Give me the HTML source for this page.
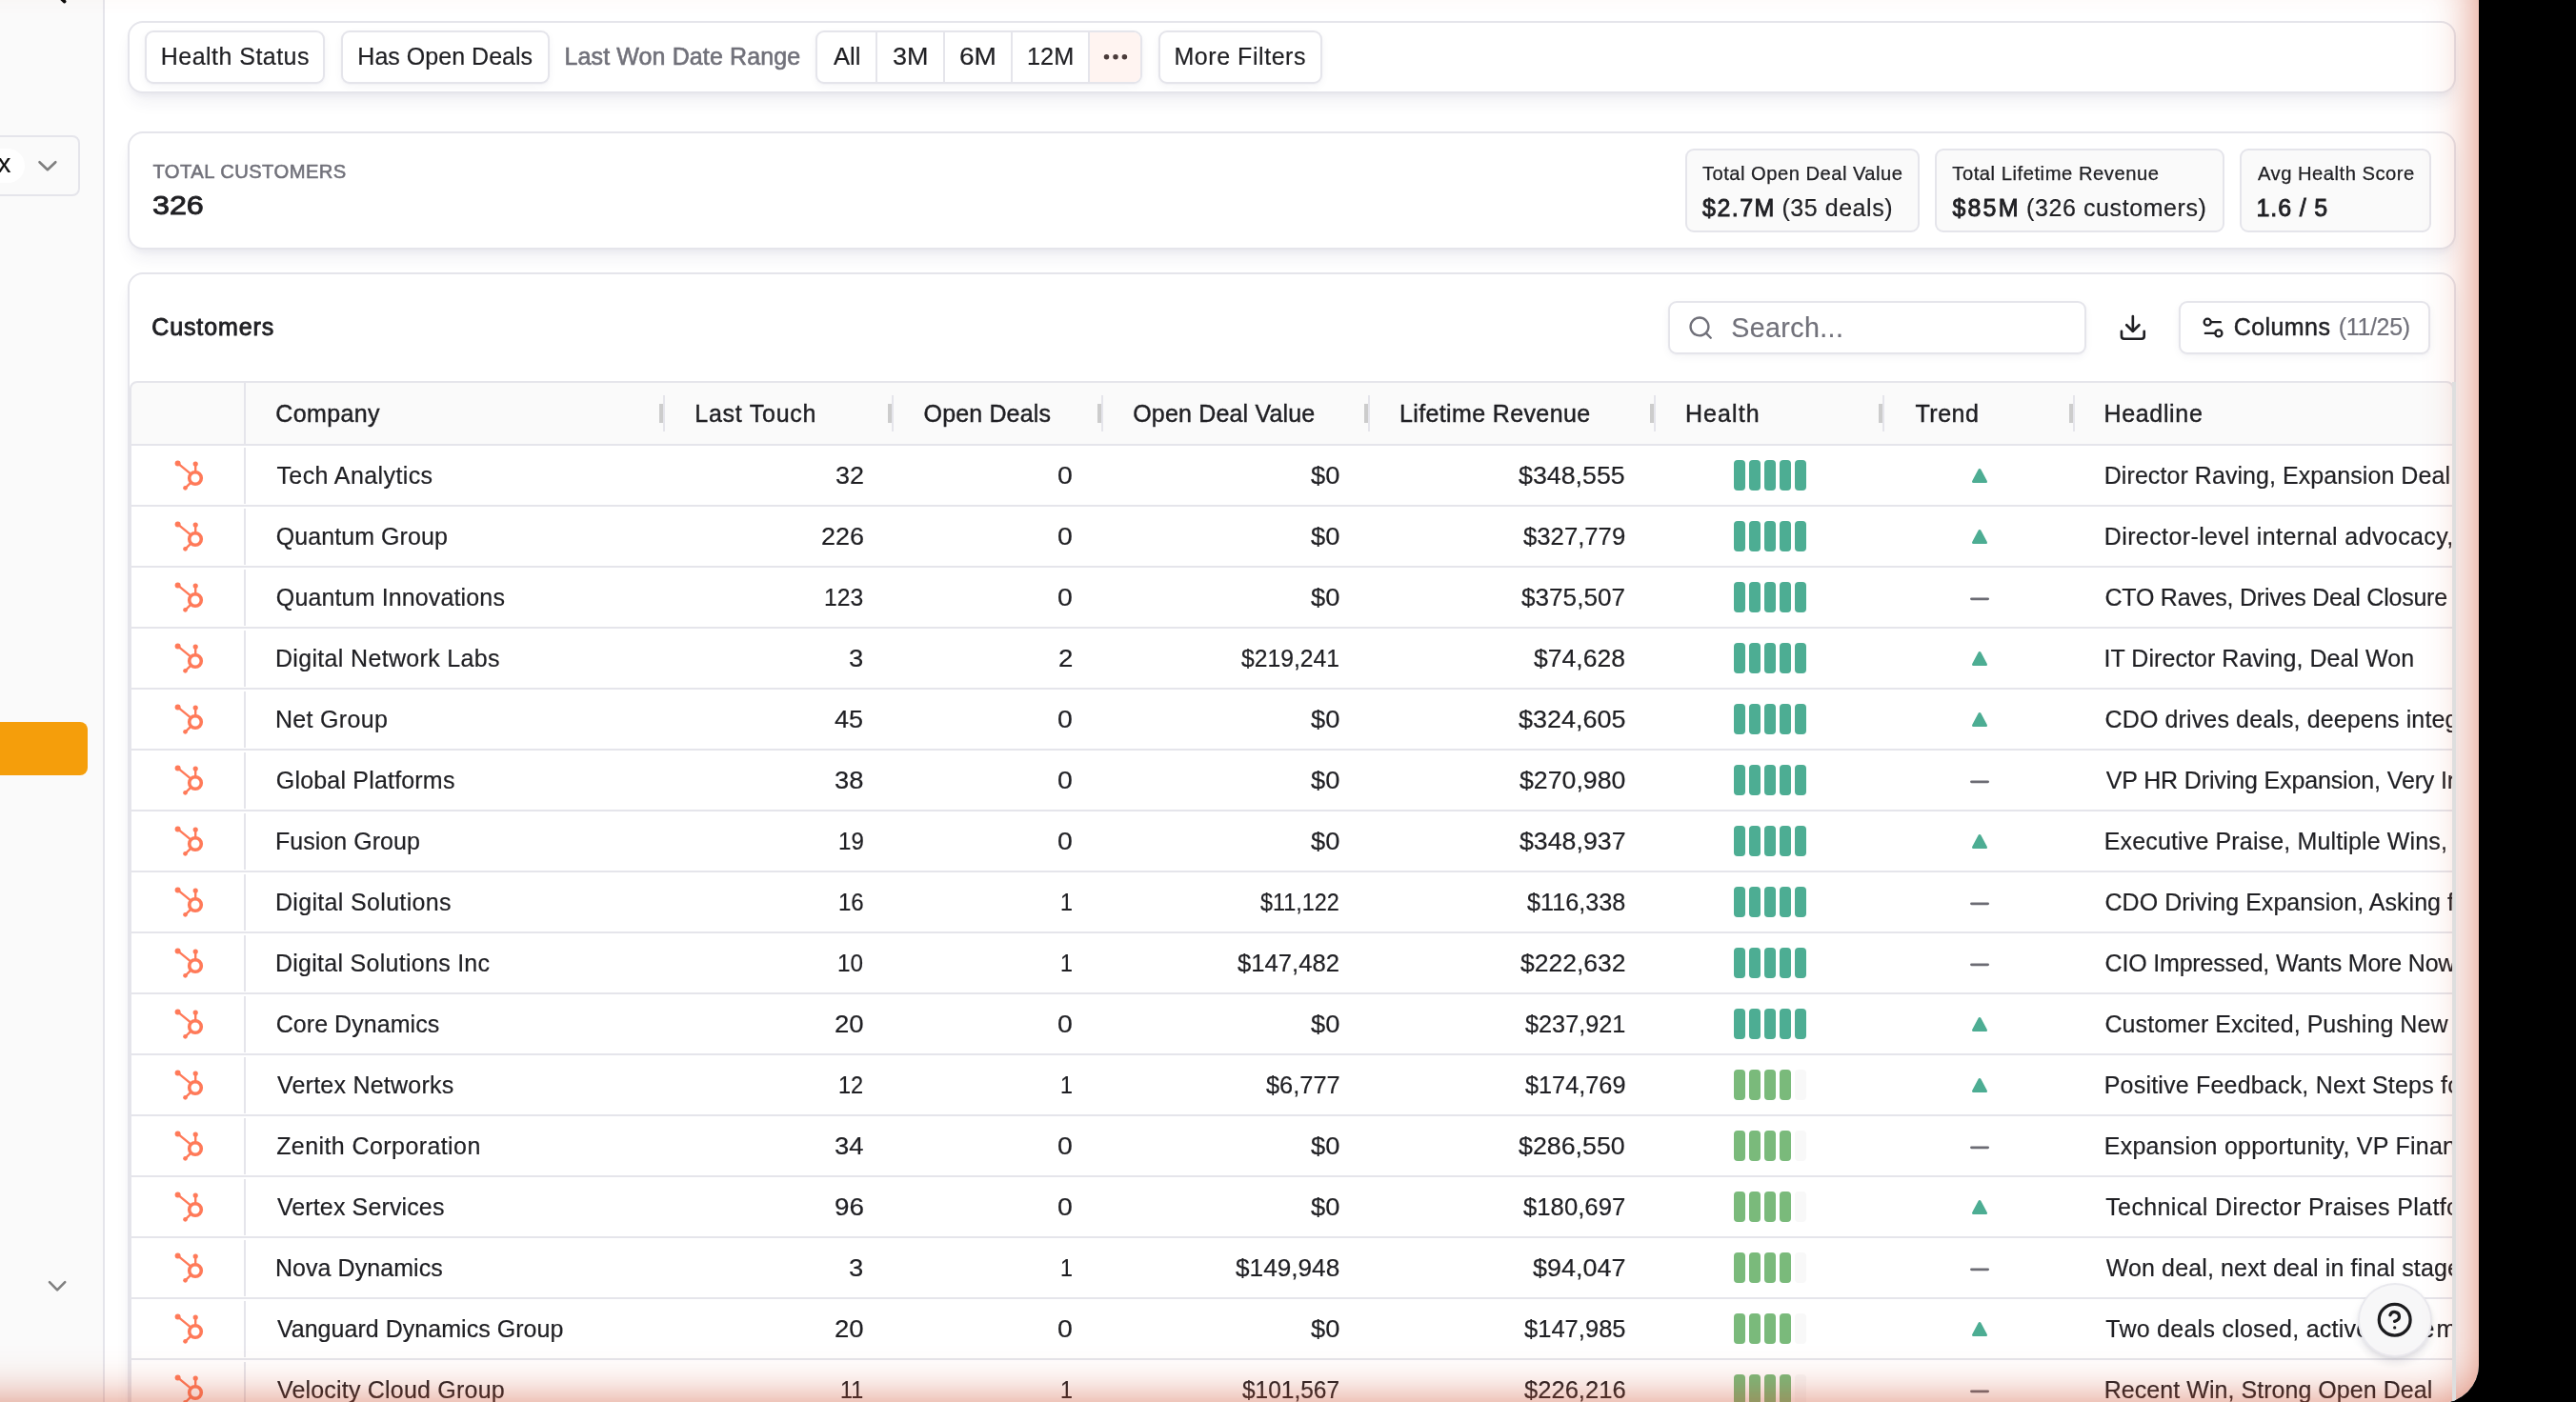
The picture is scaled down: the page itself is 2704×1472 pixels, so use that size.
<!DOCTYPE html>
<html><head><meta charset="utf-8"><title>Customers</title>
<style>
html,body{margin:0;padding:0;background:#000;overflow:hidden;}
html{width:2704px;height:1472px;}
#root{position:absolute;left:0;top:0;width:2704px;height:1472px;overflow:hidden;background:#000;}
body{width:2704px;height:1472px;overflow:hidden;position:relative;font-family:"Liberation Sans",sans-serif;}
#win{position:absolute;left:0;top:0;width:2602px;height:1473px;background:#fff;border-bottom-right-radius:40px;overflow:hidden;will-change:transform;}
.b{position:absolute;box-sizing:border-box;display:block;}
.t{position:absolute;white-space:nowrap;line-height:normal;font-family:"Liberation Sans",sans-serif;}
#glow{position:absolute;left:-300px;top:-46px;width:2902px;height:1519px;border-bottom-right-radius:40px;box-shadow:inset 0 0 50px rgba(205,80,48,0.7);pointer-events:none;z-index:20;}
</style></head><body>
<div id="root">
<div id="win">
<div class="b" style="left:0.00px;top:-50.00px;width:108.00px;height:1550.00px;background:#fafafa;"></div>
<div class="b" style="left:108.00px;top:-50.00px;width:2.00px;height:1550.00px;background:#e5e5eb;"></div>
<svg class="b" style="left:50px;top:0px" width="30" height="10" viewBox="50 0 30 10"><path d="M60.6 -5 L67.7 1.6" stroke="#0a0a0a" stroke-width="3.6" stroke-linecap="round" fill="none"/></svg>
<div class="b" style="left:-20.00px;top:142.10px;width:103.80px;height:63.65px;border:2px solid #e5e5eb;border-radius:8px;background:#fafafa;"></div>
<div class="b" style="left:-30.00px;top:155.70px;width:55.70px;height:35.90px;background:#fff;border-radius:18px;"></div>
<div class="t" style="left:-2.53px;top:155.84px;font-size:27.8px;color:#111;-webkit-text-stroke:0.18px #111;">x</div>
<svg class="b" style="left:36px;top:164px" width="28" height="20" viewBox="36 164 28 20"><path d="M41.5 170.2 L49.9 178.2 L58.3 170.2" stroke="#7f7f7f" stroke-width="2.6" stroke-linecap="round" stroke-linejoin="round" fill="none"/></svg>
<div class="b" style="left:-20.00px;top:757.80px;width:112.00px;height:56.00px;background:#f59e0b;border-radius:8px;"></div>
<svg class="b" style="left:46px;top:1340px" width="28" height="20" viewBox="46 1340 28 20"><path d="M52 1346.2 L60.1 1354.3 L68.2 1346.2" stroke="#7f7f7f" stroke-width="2.6" stroke-linecap="round" stroke-linejoin="round" fill="none"/></svg>
<div class="b" style="left:134.00px;top:22.00px;width:2444.00px;height:76.00px;border:2px solid #e5e5eb;border-radius:16px;background:#fff;box-shadow:0 12px 18px -4px rgba(40,40,90,0.075),0 4px 6px -2px rgba(40,40,90,0.05);"></div>
<div class="b" style="left:152.00px;top:32.00px;width:189.00px;height:56.00px;border:2px solid #e5e5eb;border-radius:9px;background:#fff;box-shadow:0 3px 9px rgba(40,40,90,0.045),0 1px 2px rgba(40,40,90,0.035);"></div>
<div class="t" style="left:168.85px;top:45.28px;font-size:25px;color:#202024;letter-spacing:0.456px;-webkit-text-stroke:0.18px #202024;">Health Status</div>
<div class="b" style="left:358.00px;top:32.00px;width:219.00px;height:56.00px;border:2px solid #e5e5eb;border-radius:9px;background:#fff;box-shadow:0 3px 9px rgba(40,40,90,0.045),0 1px 2px rgba(40,40,90,0.035);"></div>
<div class="t" style="left:375.35px;top:45.28px;font-size:25px;color:#202024;letter-spacing:0.025px;-webkit-text-stroke:0.18px #202024;">Has Open Deals</div>
<div class="t" style="left:592.55px;top:45.28px;font-size:25px;color:#71717a;letter-spacing:0.113px;-webkit-text-stroke:0.6px #71717a;">Last Won Date Range</div>
<div class="b" style="left:856.00px;top:32.00px;width:343.00px;height:56.00px;border:2px solid #e5e5eb;border-radius:9px;background:#fff;box-shadow:0 3px 9px rgba(40,40,90,0.045),0 1px 2px rgba(40,40,90,0.035);overflow:hidden;"><div class="b" style="left:285.9px;top:0;width:60px;height:60px;background:#fff4f1"></div><div class="b" style="left:61.0px;top:0;width:2px;height:60px;background:#e5e5eb"></div><div class="b" style="left:131.7px;top:0;width:2px;height:60px;background:#e5e5eb"></div><div class="b" style="left:203.1px;top:0;width:2px;height:60px;background:#e5e5eb"></div><div class="b" style="left:283.9px;top:0;width:2px;height:60px;background:#e5e5eb"></div></div>
<div class="t" style="left:875.05px;top:45.28px;font-size:25px;color:#202024;-webkit-text-stroke:0.18px #202024;transform:scaleX(1.0250);transform-origin:0 0;">All</div>
<div class="t" style="left:937.18px;top:45.28px;font-size:25px;color:#202024;-webkit-text-stroke:0.18px #202024;transform:scaleX(1.0780);transform-origin:0 0;">3M</div>
<div class="t" style="left:1007.17px;top:45.28px;font-size:25px;color:#202024;-webkit-text-stroke:0.18px #202024;transform:scaleX(1.1210);transform-origin:0 0;">6M</div>
<div class="t" style="left:1077.58px;top:45.28px;font-size:25px;color:#202024;-webkit-text-stroke:0.18px #202024;transform:scaleX(1.0118);transform-origin:0 0;">12M</div>
<svg class="b" style="left:1150px;top:50px" width="44" height="20" viewBox="1150 50 44 20"><circle cx="1161.5" cy="59.8" r="2.75" fill="#4a3b3a"/><circle cx="1171.0" cy="59.8" r="2.75" fill="#4a3b3a"/><circle cx="1180.4" cy="59.8" r="2.75" fill="#4a3b3a"/></svg>
<div class="b" style="left:1216.00px;top:32.00px;width:172.00px;height:56.00px;border:2px solid #e5e5eb;border-radius:9px;background:#fff;box-shadow:0 3px 9px rgba(40,40,90,0.045),0 1px 2px rgba(40,40,90,0.035);"></div>
<div class="t" style="left:1232.45px;top:45.28px;font-size:25px;color:#202024;letter-spacing:0.555px;-webkit-text-stroke:0.18px #202024;">More Filters</div>
<div class="b" style="left:134.00px;top:138.00px;width:2444.00px;height:124.00px;border:2px solid #e5e5eb;border-radius:16px;background:#fff;box-shadow:0 12px 18px -4px rgba(40,40,90,0.075),0 4px 6px -2px rgba(40,40,90,0.05);"></div>
<div class="t" style="left:160.46px;top:168.52px;font-size:20.2px;color:#71717a;letter-spacing:0.442px;-webkit-text-stroke:0.55px #71717a;">TOTAL CUSTOMERS</div>
<div class="t" style="left:159.87px;top:200.44px;font-size:27.8px;color:#202024;-webkit-text-stroke:0.9px #202024;transform:scaleX(1.1600);transform-origin:0 0;">326</div>
<div class="b" style="left:1769.00px;top:156.00px;width:246.00px;height:88.00px;border:2px solid #e5e5eb;border-radius:9px;background:#fafafa;"></div>
<div class="b" style="left:2031.00px;top:156.00px;width:304.00px;height:88.00px;border:2px solid #e5e5eb;border-radius:9px;background:#fafafa;"></div>
<div class="b" style="left:2351.00px;top:156.00px;width:201.00px;height:88.00px;border:2px solid #e5e5eb;border-radius:9px;background:#fafafa;"></div>
<div class="t" style="left:1786.96px;top:170.72px;font-size:20.2px;color:#202024;letter-spacing:0.475px;-webkit-text-stroke:0.25px #202024;">Total Open Deal Value</div>
<div class="t" style="left:2049.26px;top:170.72px;font-size:20.2px;color:#202024;letter-spacing:0.541px;-webkit-text-stroke:0.25px #202024;">Total Lifetime Revenue</div>
<div class="t" style="left:2369.96px;top:170.72px;font-size:20.2px;color:#202024;letter-spacing:0.506px;-webkit-text-stroke:0.25px #202024;">Avg Health Score</div>
<div class="t" style="left:1787.12px;top:203.68px;font-size:25px;color:#202024;letter-spacing:1.437px;-webkit-text-stroke:0.85px #202024;">$2.7M</div>
<div class="t" style="left:1870.45px;top:203.68px;font-size:25px;color:#202024;letter-spacing:0.547px;-webkit-text-stroke:0.18px #202024;">(35 deals)</div>
<div class="t" style="left:2049.42px;top:203.68px;font-size:25px;color:#202024;letter-spacing:2.200px;-webkit-text-stroke:0.85px #202024;">$85M</div>
<div class="t" style="left:2127.05px;top:203.68px;font-size:25px;color:#202024;letter-spacing:0.591px;-webkit-text-stroke:0.18px #202024;">(326 customers)</div>
<div class="t" style="left:2368.60px;top:203.68px;font-size:25px;color:#202024;letter-spacing:0.858px;-webkit-text-stroke:0.85px #202024;">1.6 / 5</div>
<div class="b" style="left:134.00px;top:286.00px;width:2444.00px;height:1314.00px;border:2px solid #e5e5eb;border-radius:16px;background:#fff;box-shadow:0 12px 18px -4px rgba(40,40,90,0.075),0 4px 6px -2px rgba(40,40,90,0.05);"></div>
<div class="t" style="left:159.22px;top:329.38px;font-size:25px;color:#202024;letter-spacing:0.888px;-webkit-text-stroke:0.85px #202024;">Customers</div>
<div class="b" style="left:1751.00px;top:316.00px;width:439.00px;height:56.00px;border:2px solid #e5e5eb;border-radius:9px;background:#fff;box-shadow:0 3px 9px rgba(40,40,90,0.045),0 1px 2px rgba(40,40,90,0.035);"></div>
<svg class="b" style="left:1770.87px;top:329.67px" width="28.32" height="28.32" viewBox="0 0 24 24" fill="none" stroke="#71717a" stroke-width="2" stroke-linecap="round" stroke-linejoin="round"><circle cx="11" cy="11" r="8"/><path d="m21 21-4.3-4.3"/></svg>
<div class="t" style="left:1817.18px;top:327.82px;font-size:28.6px;color:#71717a;letter-spacing:0.408px;-webkit-text-stroke:0.18px #71717a;">Search...</div>
<svg class="b" style="left:2223.06px;top:328.11px" width="31.68" height="31.68" viewBox="0 0 24 24" fill="none" stroke="#202024" stroke-width="2" stroke-linecap="round" stroke-linejoin="round"><path d="M21 15v4a2 2 0 0 1-2 2H5a2 2 0 0 1-2-2v-4"/><polyline points="7 10 12 15 17 10"/><line x1="12" x2="12" y1="15" y2="3"/></svg>
<div class="b" style="left:2287.00px;top:316.00px;width:264.00px;height:56.00px;border:2px solid #e5e5eb;border-radius:9px;background:#fff;box-shadow:0 3px 9px rgba(40,40,90,0.045),0 1px 2px rgba(40,40,90,0.035);"></div>
<svg class="b" style="left:2308.80px;top:329.90px" width="28.08" height="28.08" viewBox="0 0 24 24" fill="none" stroke="#202024" stroke-width="2" stroke-linecap="round" stroke-linejoin="round"><path d="M18.6 7H11"/><path d="M14 17H5"/><circle cx="17" cy="17" r="3"/><circle cx="7" cy="7" r="3"/></svg>
<div class="t" style="left:2344.72px;top:329.38px;font-size:25px;color:#202024;letter-spacing:0.421px;-webkit-text-stroke:0.45px #202024;">Columns</div>
<div class="t" style="left:2454.75px;top:329.38px;font-size:25px;color:#71717a;letter-spacing:-0.342px;-webkit-text-stroke:0.18px #71717a;">(11/25)</div>
<div class="b" style="left:136.00px;top:400.00px;width:2440.00px;height:68.00px;border:2px solid #e5e5eb;border-radius:8px 8px 0 0;background:#fafafa;"></div>
<div class="b" style="left:136.00px;top:466.00px;width:2.00px;height:1134.00px;background:#e5e5eb;"></div>
<div class="b" style="left:256.00px;top:402.00px;width:2.00px;height:64.00px;background:#e5e5eb;"></div>
<div class="b" style="left:696.00px;top:415.00px;width:2.00px;height:38.00px;background:#e5e5eb;"></div>
<div class="b" style="left:692.00px;top:424.00px;width:4.00px;height:20.00px;background:#cccccc;"></div>
<div class="b" style="left:936.00px;top:415.00px;width:2.00px;height:38.00px;background:#e5e5eb;"></div>
<div class="b" style="left:932.00px;top:424.00px;width:4.00px;height:20.00px;background:#cccccc;"></div>
<div class="b" style="left:1156.00px;top:415.00px;width:2.00px;height:38.00px;background:#e5e5eb;"></div>
<div class="b" style="left:1152.00px;top:424.00px;width:4.00px;height:20.00px;background:#cccccc;"></div>
<div class="b" style="left:1436.00px;top:415.00px;width:2.00px;height:38.00px;background:#e5e5eb;"></div>
<div class="b" style="left:1432.00px;top:424.00px;width:4.00px;height:20.00px;background:#cccccc;"></div>
<div class="b" style="left:1736.00px;top:415.00px;width:2.00px;height:38.00px;background:#e5e5eb;"></div>
<div class="b" style="left:1732.00px;top:424.00px;width:4.00px;height:20.00px;background:#cccccc;"></div>
<div class="b" style="left:1976.00px;top:415.00px;width:2.00px;height:38.00px;background:#e5e5eb;"></div>
<div class="b" style="left:1972.00px;top:424.00px;width:4.00px;height:20.00px;background:#cccccc;"></div>
<div class="b" style="left:2176.00px;top:415.00px;width:2.00px;height:38.00px;background:#e5e5eb;"></div>
<div class="b" style="left:2172.00px;top:424.00px;width:4.00px;height:20.00px;background:#cccccc;"></div>
<div class="t" style="left:289.23px;top:420.38px;font-size:25px;color:#202024;letter-spacing:0.388px;-webkit-text-stroke:0.4px #202024;">Company</div>
<div class="t" style="left:729.25px;top:420.38px;font-size:25px;color:#202024;letter-spacing:0.747px;-webkit-text-stroke:0.4px #202024;">Last Touch</div>
<div class="t" style="left:969.62px;top:420.38px;font-size:25px;color:#202024;letter-spacing:0.139px;-webkit-text-stroke:0.4px #202024;">Open Deals</div>
<div class="t" style="left:1189.23px;top:420.38px;font-size:25px;color:#202024;letter-spacing:0.173px;-webkit-text-stroke:0.4px #202024;">Open Deal Value</div>
<div class="t" style="left:1468.95px;top:420.38px;font-size:25px;color:#202024;letter-spacing:0.373px;-webkit-text-stroke:0.4px #202024;">Lifetime Revenue</div>
<div class="t" style="left:1768.95px;top:420.38px;font-size:25px;color:#202024;letter-spacing:1.085px;-webkit-text-stroke:0.4px #202024;">Health</div>
<div class="t" style="left:2010.45px;top:420.38px;font-size:25px;color:#202024;letter-spacing:0.519px;-webkit-text-stroke:0.4px #202024;">Trend</div>
<div class="t" style="left:2208.45px;top:420.38px;font-size:25px;color:#202024;letter-spacing:0.668px;-webkit-text-stroke:0.4px #202024;">Headline</div>
<div class="b" style="left:138.00px;top:530.00px;width:2436.00px;height:2.00px;background:#e5e5eb;"></div>
<div class="b" style="left:256.00px;top:469.50px;width:2.00px;height:59.50px;background:#e5e5eb;"></div>
<svg class="b" style="left:178.50px;top:480.10px" width="40" height="40" viewBox="-26 -22 40 40"><g stroke="#ff7a59" stroke-width="2.4" stroke-linecap="round" fill="none"><path d="M-18.4 -15.6 L-5 -4.6"/><path d="M0.2 -15 L0.2 -6"/><path d="M-10.5 10.3 L-4.6 4.6"/></g><circle cx="0" cy="0" r="6.3" fill="none" stroke="#ff7a59" stroke-width="3.6"/><circle cx="-18.4" cy="-15.6" r="3.0" fill="#ff7a59"/><circle cx="0.2" cy="-15" r="2.6" fill="#ff7a59"/><circle cx="-10.5" cy="10.3" r="2.35" fill="#ff7a59"/></svg>
<div class="t" style="left:290.45px;top:485.27px;font-size:25px;color:#202024;letter-spacing:0.404px;-webkit-text-stroke:0.18px #202024;">Tech Analytics</div>
<div class="t" style="left:876.68px;top:485.27px;font-size:25px;color:#202024;-webkit-text-stroke:0.18px #202024;transform:scaleX(1.0781);transform-origin:0 0;">32</div>
<div class="t" style="left:1110.19px;top:485.27px;font-size:25px;color:#202024;-webkit-text-stroke:0.18px #202024;transform:scaleX(1.1381);transform-origin:0 0;">0</div>
<div class="t" style="left:1375.80px;top:485.27px;font-size:25px;color:#202024;-webkit-text-stroke:0.18px #202024;transform:scaleX(1.0923);transform-origin:0 0;">$0</div>
<div class="t" style="left:1594.41px;top:485.27px;font-size:25px;color:#202024;-webkit-text-stroke:0.18px #202024;transform:scaleX(1.0714);transform-origin:0 0;">$348,555</div>
<div class="b" style="left:1820.00px;top:483.00px;width:12.00px;height:32.00px;background:#4dad93;border-radius:4px;"></div>
<div class="b" style="left:1836.00px;top:483.00px;width:12.00px;height:32.00px;background:#4dad93;border-radius:4px;"></div>
<div class="b" style="left:1852.00px;top:483.00px;width:12.00px;height:32.00px;background:#4dad93;border-radius:4px;"></div>
<div class="b" style="left:1868.00px;top:483.00px;width:12.00px;height:32.00px;background:#4dad93;border-radius:4px;"></div>
<div class="b" style="left:1884.00px;top:483.00px;width:12.00px;height:32.00px;background:#4dad93;border-radius:4px;"></div>
<svg class="b" style="left:2066px;top:487.20px" width="24" height="24" viewBox="-12 -12 24 24"><path d="M0 -5.5 L6.5 6.6 L-6.5 6.6 Z" fill="#4dad93" stroke="#4dad93" stroke-width="3" stroke-linejoin="round"/></svg>
<div class="t" style="left:2208.75px;top:485.27px;font-size:25px;color:#202024;letter-spacing:0.065px;-webkit-text-stroke:0.18px #202024;width:365.25px;overflow:hidden;">Director Raving, Expansion Deal</div>
<div class="b" style="left:138.00px;top:594.00px;width:2436.00px;height:2.00px;background:#e5e5eb;"></div>
<div class="b" style="left:256.00px;top:533.50px;width:2.00px;height:59.50px;background:#e5e5eb;"></div>
<svg class="b" style="left:178.50px;top:544.10px" width="40" height="40" viewBox="-26 -22 40 40"><g stroke="#ff7a59" stroke-width="2.4" stroke-linecap="round" fill="none"><path d="M-18.4 -15.6 L-5 -4.6"/><path d="M0.2 -15 L0.2 -6"/><path d="M-10.5 10.3 L-4.6 4.6"/></g><circle cx="0" cy="0" r="6.3" fill="none" stroke="#ff7a59" stroke-width="3.6"/><circle cx="-18.4" cy="-15.6" r="3.0" fill="#ff7a59"/><circle cx="0.2" cy="-15" r="2.6" fill="#ff7a59"/><circle cx="-10.5" cy="10.3" r="2.35" fill="#ff7a59"/></svg>
<div class="t" style="left:289.82px;top:549.28px;font-size:25px;color:#202024;letter-spacing:0.065px;-webkit-text-stroke:0.18px #202024;">Quantum Group</div>
<div class="t" style="left:861.55px;top:549.28px;font-size:25px;color:#202024;-webkit-text-stroke:0.18px #202024;transform:scaleX(1.0775);transform-origin:0 0;">226</div>
<div class="t" style="left:1110.19px;top:549.28px;font-size:25px;color:#202024;-webkit-text-stroke:0.18px #202024;transform:scaleX(1.1381);transform-origin:0 0;">0</div>
<div class="t" style="left:1375.80px;top:549.28px;font-size:25px;color:#202024;-webkit-text-stroke:0.18px #202024;transform:scaleX(1.0923);transform-origin:0 0;">$0</div>
<div class="t" style="left:1599.02px;top:549.28px;font-size:25px;color:#202024;-webkit-text-stroke:0.18px #202024;transform:scaleX(1.0280);transform-origin:0 0;">$327,779</div>
<div class="b" style="left:1820.00px;top:547.00px;width:12.00px;height:32.00px;background:#4dad93;border-radius:4px;"></div>
<div class="b" style="left:1836.00px;top:547.00px;width:12.00px;height:32.00px;background:#4dad93;border-radius:4px;"></div>
<div class="b" style="left:1852.00px;top:547.00px;width:12.00px;height:32.00px;background:#4dad93;border-radius:4px;"></div>
<div class="b" style="left:1868.00px;top:547.00px;width:12.00px;height:32.00px;background:#4dad93;border-radius:4px;"></div>
<div class="b" style="left:1884.00px;top:547.00px;width:12.00px;height:32.00px;background:#4dad93;border-radius:4px;"></div>
<svg class="b" style="left:2066px;top:551.20px" width="24" height="24" viewBox="-12 -12 24 24"><path d="M0 -5.5 L6.5 6.6 L-6.5 6.6 Z" fill="#4dad93" stroke="#4dad93" stroke-width="3" stroke-linejoin="round"/></svg>
<div class="t" style="left:2208.75px;top:549.28px;font-size:25px;color:#202024;letter-spacing:0.395px;-webkit-text-stroke:0.18px #202024;width:365.25px;overflow:hidden;">Director-level internal advocacy,</div>
<div class="b" style="left:138.00px;top:658.00px;width:2436.00px;height:2.00px;background:#e5e5eb;"></div>
<div class="b" style="left:256.00px;top:597.50px;width:2.00px;height:59.50px;background:#e5e5eb;"></div>
<svg class="b" style="left:178.50px;top:608.10px" width="40" height="40" viewBox="-26 -22 40 40"><g stroke="#ff7a59" stroke-width="2.4" stroke-linecap="round" fill="none"><path d="M-18.4 -15.6 L-5 -4.6"/><path d="M0.2 -15 L0.2 -6"/><path d="M-10.5 10.3 L-4.6 4.6"/></g><circle cx="0" cy="0" r="6.3" fill="none" stroke="#ff7a59" stroke-width="3.6"/><circle cx="-18.4" cy="-15.6" r="3.0" fill="#ff7a59"/><circle cx="0.2" cy="-15" r="2.6" fill="#ff7a59"/><circle cx="-10.5" cy="10.3" r="2.35" fill="#ff7a59"/></svg>
<div class="t" style="left:289.82px;top:613.28px;font-size:25px;color:#202024;letter-spacing:0.135px;-webkit-text-stroke:0.18px #202024;">Quantum Innovations</div>
<div class="t" style="left:865.22px;top:613.28px;font-size:25px;color:#202024;-webkit-text-stroke:0.18px #202024;transform:scaleX(0.9871);transform-origin:0 0;">123</div>
<div class="t" style="left:1110.19px;top:613.28px;font-size:25px;color:#202024;-webkit-text-stroke:0.18px #202024;transform:scaleX(1.1381);transform-origin:0 0;">0</div>
<div class="t" style="left:1375.80px;top:613.28px;font-size:25px;color:#202024;-webkit-text-stroke:0.18px #202024;transform:scaleX(1.0923);transform-origin:0 0;">$0</div>
<div class="t" style="left:1597.31px;top:613.28px;font-size:25px;color:#202024;-webkit-text-stroke:0.18px #202024;transform:scaleX(1.0453);transform-origin:0 0;">$375,507</div>
<div class="b" style="left:1820.00px;top:611.00px;width:12.00px;height:32.00px;background:#4dad93;border-radius:4px;"></div>
<div class="b" style="left:1836.00px;top:611.00px;width:12.00px;height:32.00px;background:#4dad93;border-radius:4px;"></div>
<div class="b" style="left:1852.00px;top:611.00px;width:12.00px;height:32.00px;background:#4dad93;border-radius:4px;"></div>
<div class="b" style="left:1868.00px;top:611.00px;width:12.00px;height:32.00px;background:#4dad93;border-radius:4px;"></div>
<div class="b" style="left:1884.00px;top:611.00px;width:12.00px;height:32.00px;background:#4dad93;border-radius:4px;"></div>
<svg class="b" style="left:2064px;top:617.20px" width="28" height="24" viewBox="2064 -10 28 24"><path d="M2069.5 1.85 L2086.6 1.85" stroke="#6c6c74" stroke-width="2.9" stroke-linecap="round" fill="none"/></svg>
<div class="t" style="left:2209.53px;top:613.28px;font-size:25px;color:#202024;letter-spacing:-0.232px;-webkit-text-stroke:0.18px #202024;width:364.47px;overflow:hidden;">CTO Raves, Drives Deal Closure</div>
<div class="b" style="left:138.00px;top:722.00px;width:2436.00px;height:2.00px;background:#e5e5eb;"></div>
<div class="b" style="left:256.00px;top:661.50px;width:2.00px;height:59.50px;background:#e5e5eb;"></div>
<svg class="b" style="left:178.50px;top:672.10px" width="40" height="40" viewBox="-26 -22 40 40"><g stroke="#ff7a59" stroke-width="2.4" stroke-linecap="round" fill="none"><path d="M-18.4 -15.6 L-5 -4.6"/><path d="M0.2 -15 L0.2 -6"/><path d="M-10.5 10.3 L-4.6 4.6"/></g><circle cx="0" cy="0" r="6.3" fill="none" stroke="#ff7a59" stroke-width="3.6"/><circle cx="-18.4" cy="-15.6" r="3.0" fill="#ff7a59"/><circle cx="0.2" cy="-15" r="2.6" fill="#ff7a59"/><circle cx="-10.5" cy="10.3" r="2.35" fill="#ff7a59"/></svg>
<div class="t" style="left:288.95px;top:677.28px;font-size:25px;color:#202024;letter-spacing:0.332px;-webkit-text-stroke:0.18px #202024;">Digital Network Labs</div>
<div class="t" style="left:891.26px;top:677.28px;font-size:25px;color:#202024;-webkit-text-stroke:0.18px #202024;transform:scaleX(1.0970);transform-origin:0 0;">3</div>
<div class="t" style="left:1110.92px;top:677.28px;font-size:25px;color:#202024;-webkit-text-stroke:0.18px #202024;transform:scaleX(1.1053);transform-origin:0 0;">2</div>
<div class="t" style="left:1303.23px;top:677.28px;font-size:25px;color:#202024;-webkit-text-stroke:0.18px #202024;transform:scaleX(0.9886);transform-origin:0 0;">$219,241</div>
<div class="t" style="left:1610.21px;top:677.28px;font-size:25px;color:#202024;-webkit-text-stroke:0.18px #202024;transform:scaleX(1.0615);transform-origin:0 0;">$74,628</div>
<div class="b" style="left:1820.00px;top:675.00px;width:12.00px;height:32.00px;background:#4dad93;border-radius:4px;"></div>
<div class="b" style="left:1836.00px;top:675.00px;width:12.00px;height:32.00px;background:#4dad93;border-radius:4px;"></div>
<div class="b" style="left:1852.00px;top:675.00px;width:12.00px;height:32.00px;background:#4dad93;border-radius:4px;"></div>
<div class="b" style="left:1868.00px;top:675.00px;width:12.00px;height:32.00px;background:#4dad93;border-radius:4px;"></div>
<div class="b" style="left:1884.00px;top:675.00px;width:12.00px;height:32.00px;background:#4dad93;border-radius:4px;"></div>
<svg class="b" style="left:2066px;top:679.20px" width="24" height="24" viewBox="-12 -12 24 24"><path d="M0 -5.5 L6.5 6.6 L-6.5 6.6 Z" fill="#4dad93" stroke="#4dad93" stroke-width="3" stroke-linejoin="round"/></svg>
<div class="t" style="left:2208.50px;top:677.28px;font-size:25px;color:#202024;letter-spacing:0.053px;-webkit-text-stroke:0.18px #202024;width:365.50px;overflow:hidden;">IT Director Raving, Deal Won</div>
<div class="b" style="left:138.00px;top:786.00px;width:2436.00px;height:2.00px;background:#e5e5eb;"></div>
<div class="b" style="left:256.00px;top:725.50px;width:2.00px;height:59.50px;background:#e5e5eb;"></div>
<svg class="b" style="left:178.50px;top:736.10px" width="40" height="40" viewBox="-26 -22 40 40"><g stroke="#ff7a59" stroke-width="2.4" stroke-linecap="round" fill="none"><path d="M-18.4 -15.6 L-5 -4.6"/><path d="M0.2 -15 L0.2 -6"/><path d="M-10.5 10.3 L-4.6 4.6"/></g><circle cx="0" cy="0" r="6.3" fill="none" stroke="#ff7a59" stroke-width="3.6"/><circle cx="-18.4" cy="-15.6" r="3.0" fill="#ff7a59"/><circle cx="0.2" cy="-15" r="2.6" fill="#ff7a59"/><circle cx="-10.5" cy="10.3" r="2.35" fill="#ff7a59"/></svg>
<div class="t" style="left:288.95px;top:741.28px;font-size:25px;color:#202024;letter-spacing:0.322px;-webkit-text-stroke:0.18px #202024;">Net Group</div>
<div class="t" style="left:876.38px;top:741.28px;font-size:25px;color:#202024;-webkit-text-stroke:0.18px #202024;transform:scaleX(1.0812);transform-origin:0 0;">45</div>
<div class="t" style="left:1110.19px;top:741.28px;font-size:25px;color:#202024;-webkit-text-stroke:0.18px #202024;transform:scaleX(1.1381);transform-origin:0 0;">0</div>
<div class="t" style="left:1375.80px;top:741.28px;font-size:25px;color:#202024;-webkit-text-stroke:0.18px #202024;transform:scaleX(1.0923);transform-origin:0 0;">$0</div>
<div class="t" style="left:1593.60px;top:741.28px;font-size:25px;color:#202024;-webkit-text-stroke:0.18px #202024;transform:scaleX(1.0792);transform-origin:0 0;">$324,605</div>
<div class="b" style="left:1820.00px;top:739.00px;width:12.00px;height:32.00px;background:#4dad93;border-radius:4px;"></div>
<div class="b" style="left:1836.00px;top:739.00px;width:12.00px;height:32.00px;background:#4dad93;border-radius:4px;"></div>
<div class="b" style="left:1852.00px;top:739.00px;width:12.00px;height:32.00px;background:#4dad93;border-radius:4px;"></div>
<div class="b" style="left:1868.00px;top:739.00px;width:12.00px;height:32.00px;background:#4dad93;border-radius:4px;"></div>
<div class="b" style="left:1884.00px;top:739.00px;width:12.00px;height:32.00px;background:#4dad93;border-radius:4px;"></div>
<svg class="b" style="left:2066px;top:743.20px" width="24" height="24" viewBox="-12 -12 24 24"><path d="M0 -5.5 L6.5 6.6 L-6.5 6.6 Z" fill="#4dad93" stroke="#4dad93" stroke-width="3" stroke-linejoin="round"/></svg>
<div class="t" style="left:2209.53px;top:741.28px;font-size:25px;color:#202024;letter-spacing:0.134px;-webkit-text-stroke:0.18px #202024;width:364.47px;overflow:hidden;">CDO drives deals, deepens integration</div>
<div class="b" style="left:138.00px;top:850.00px;width:2436.00px;height:2.00px;background:#e5e5eb;"></div>
<div class="b" style="left:256.00px;top:789.50px;width:2.00px;height:59.50px;background:#e5e5eb;"></div>
<svg class="b" style="left:178.50px;top:800.10px" width="40" height="40" viewBox="-26 -22 40 40"><g stroke="#ff7a59" stroke-width="2.4" stroke-linecap="round" fill="none"><path d="M-18.4 -15.6 L-5 -4.6"/><path d="M0.2 -15 L0.2 -6"/><path d="M-10.5 10.3 L-4.6 4.6"/></g><circle cx="0" cy="0" r="6.3" fill="none" stroke="#ff7a59" stroke-width="3.6"/><circle cx="-18.4" cy="-15.6" r="3.0" fill="#ff7a59"/><circle cx="0.2" cy="-15" r="2.6" fill="#ff7a59"/><circle cx="-10.5" cy="10.3" r="2.35" fill="#ff7a59"/></svg>
<div class="t" style="left:289.75px;top:805.28px;font-size:25px;color:#202024;letter-spacing:0.190px;-webkit-text-stroke:0.18px #202024;">Global Platforms</div>
<div class="t" style="left:876.06px;top:805.28px;font-size:25px;color:#202024;-webkit-text-stroke:0.18px #202024;transform:scaleX(1.0941);transform-origin:0 0;">38</div>
<div class="t" style="left:1110.19px;top:805.28px;font-size:25px;color:#202024;-webkit-text-stroke:0.18px #202024;transform:scaleX(1.1381);transform-origin:0 0;">0</div>
<div class="t" style="left:1375.80px;top:805.28px;font-size:25px;color:#202024;-webkit-text-stroke:0.18px #202024;transform:scaleX(1.0923);transform-origin:0 0;">$0</div>
<div class="t" style="left:1594.61px;top:805.28px;font-size:25px;color:#202024;-webkit-text-stroke:0.18px #202024;transform:scaleX(1.0687);transform-origin:0 0;">$270,980</div>
<div class="b" style="left:1820.00px;top:803.00px;width:12.00px;height:32.00px;background:#4dad93;border-radius:4px;"></div>
<div class="b" style="left:1836.00px;top:803.00px;width:12.00px;height:32.00px;background:#4dad93;border-radius:4px;"></div>
<div class="b" style="left:1852.00px;top:803.00px;width:12.00px;height:32.00px;background:#4dad93;border-radius:4px;"></div>
<div class="b" style="left:1868.00px;top:803.00px;width:12.00px;height:32.00px;background:#4dad93;border-radius:4px;"></div>
<div class="b" style="left:1884.00px;top:803.00px;width:12.00px;height:32.00px;background:#4dad93;border-radius:4px;"></div>
<svg class="b" style="left:2064px;top:809.20px" width="28" height="24" viewBox="2064 -10 28 24"><path d="M2069.5 1.85 L2086.6 1.85" stroke="#6c6c74" stroke-width="2.9" stroke-linecap="round" fill="none"/></svg>
<div class="t" style="left:2210.68px;top:805.28px;font-size:25px;color:#202024;letter-spacing:-0.129px;-webkit-text-stroke:0.18px #202024;width:363.32px;overflow:hidden;">VP HR Driving Expansion, Very Interested</div>
<div class="b" style="left:138.00px;top:914.00px;width:2436.00px;height:2.00px;background:#e5e5eb;"></div>
<div class="b" style="left:256.00px;top:853.50px;width:2.00px;height:59.50px;background:#e5e5eb;"></div>
<svg class="b" style="left:178.50px;top:864.10px" width="40" height="40" viewBox="-26 -22 40 40"><g stroke="#ff7a59" stroke-width="2.4" stroke-linecap="round" fill="none"><path d="M-18.4 -15.6 L-5 -4.6"/><path d="M0.2 -15 L0.2 -6"/><path d="M-10.5 10.3 L-4.6 4.6"/></g><circle cx="0" cy="0" r="6.3" fill="none" stroke="#ff7a59" stroke-width="3.6"/><circle cx="-18.4" cy="-15.6" r="3.0" fill="#ff7a59"/><circle cx="0.2" cy="-15" r="2.6" fill="#ff7a59"/><circle cx="-10.5" cy="10.3" r="2.35" fill="#ff7a59"/></svg>
<div class="t" style="left:288.95px;top:869.28px;font-size:25px;color:#202024;letter-spacing:0.041px;-webkit-text-stroke:0.18px #202024;">Fusion Group</div>
<div class="t" style="left:879.67px;top:869.28px;font-size:25px;color:#202024;-webkit-text-stroke:0.18px #202024;transform:scaleX(0.9626);transform-origin:0 0;">19</div>
<div class="t" style="left:1110.19px;top:869.28px;font-size:25px;color:#202024;-webkit-text-stroke:0.18px #202024;transform:scaleX(1.1381);transform-origin:0 0;">0</div>
<div class="t" style="left:1375.80px;top:869.28px;font-size:25px;color:#202024;-webkit-text-stroke:0.18px #202024;transform:scaleX(1.0923);transform-origin:0 0;">$0</div>
<div class="t" style="left:1594.81px;top:869.28px;font-size:25px;color:#202024;-webkit-text-stroke:0.18px #202024;transform:scaleX(1.0696);transform-origin:0 0;">$348,937</div>
<div class="b" style="left:1820.00px;top:867.00px;width:12.00px;height:32.00px;background:#4dad93;border-radius:4px;"></div>
<div class="b" style="left:1836.00px;top:867.00px;width:12.00px;height:32.00px;background:#4dad93;border-radius:4px;"></div>
<div class="b" style="left:1852.00px;top:867.00px;width:12.00px;height:32.00px;background:#4dad93;border-radius:4px;"></div>
<div class="b" style="left:1868.00px;top:867.00px;width:12.00px;height:32.00px;background:#4dad93;border-radius:4px;"></div>
<div class="b" style="left:1884.00px;top:867.00px;width:12.00px;height:32.00px;background:#4dad93;border-radius:4px;"></div>
<svg class="b" style="left:2066px;top:871.20px" width="24" height="24" viewBox="-12 -12 24 24"><path d="M0 -5.5 L6.5 6.6 L-6.5 6.6 Z" fill="#4dad93" stroke="#4dad93" stroke-width="3" stroke-linejoin="round"/></svg>
<div class="t" style="left:2208.75px;top:869.28px;font-size:25px;color:#202024;letter-spacing:0.146px;-webkit-text-stroke:0.18px #202024;width:365.25px;overflow:hidden;">Executive Praise, Multiple Wins,</div>
<div class="b" style="left:138.00px;top:978.00px;width:2436.00px;height:2.00px;background:#e5e5eb;"></div>
<div class="b" style="left:256.00px;top:917.50px;width:2.00px;height:59.50px;background:#e5e5eb;"></div>
<svg class="b" style="left:178.50px;top:928.10px" width="40" height="40" viewBox="-26 -22 40 40"><g stroke="#ff7a59" stroke-width="2.4" stroke-linecap="round" fill="none"><path d="M-18.4 -15.6 L-5 -4.6"/><path d="M0.2 -15 L0.2 -6"/><path d="M-10.5 10.3 L-4.6 4.6"/></g><circle cx="0" cy="0" r="6.3" fill="none" stroke="#ff7a59" stroke-width="3.6"/><circle cx="-18.4" cy="-15.6" r="3.0" fill="#ff7a59"/><circle cx="0.2" cy="-15" r="2.6" fill="#ff7a59"/><circle cx="-10.5" cy="10.3" r="2.35" fill="#ff7a59"/></svg>
<div class="t" style="left:288.95px;top:933.28px;font-size:25px;color:#202024;letter-spacing:0.331px;-webkit-text-stroke:0.18px #202024;">Digital Solutions</div>
<div class="t" style="left:879.68px;top:933.28px;font-size:25px;color:#202024;-webkit-text-stroke:0.18px #202024;transform:scaleX(0.9597);transform-origin:0 0;">16</div>
<div class="t" style="left:1113.11px;top:933.28px;font-size:25px;color:#202024;-webkit-text-stroke:0.18px #202024;transform:scaleX(0.9300);transform-origin:0 0;">1</div>
<div class="t" style="left:1323.44px;top:933.28px;font-size:25px;color:#202024;-webkit-text-stroke:0.18px #202024;transform:scaleX(0.9359);transform-origin:0 0;">$11,122</div>
<div class="t" style="left:1602.72px;top:933.28px;font-size:25px;color:#202024;-webkit-text-stroke:0.18px #202024;transform:scaleX(1.0092);transform-origin:0 0;">$116,338</div>
<div class="b" style="left:1820.00px;top:931.00px;width:12.00px;height:32.00px;background:#4dad93;border-radius:4px;"></div>
<div class="b" style="left:1836.00px;top:931.00px;width:12.00px;height:32.00px;background:#4dad93;border-radius:4px;"></div>
<div class="b" style="left:1852.00px;top:931.00px;width:12.00px;height:32.00px;background:#4dad93;border-radius:4px;"></div>
<div class="b" style="left:1868.00px;top:931.00px;width:12.00px;height:32.00px;background:#4dad93;border-radius:4px;"></div>
<div class="b" style="left:1884.00px;top:931.00px;width:12.00px;height:32.00px;background:#4dad93;border-radius:4px;"></div>
<svg class="b" style="left:2064px;top:937.20px" width="28" height="24" viewBox="2064 -10 28 24"><path d="M2069.5 1.85 L2086.6 1.85" stroke="#6c6c74" stroke-width="2.9" stroke-linecap="round" fill="none"/></svg>
<div class="t" style="left:2209.53px;top:933.28px;font-size:25px;color:#202024;letter-spacing:0.034px;-webkit-text-stroke:0.18px #202024;width:364.47px;overflow:hidden;">CDO Driving Expansion, Asking for More</div>
<div class="b" style="left:138.00px;top:1042.00px;width:2436.00px;height:2.00px;background:#e5e5eb;"></div>
<div class="b" style="left:256.00px;top:981.50px;width:2.00px;height:59.50px;background:#e5e5eb;"></div>
<svg class="b" style="left:178.50px;top:992.10px" width="40" height="40" viewBox="-26 -22 40 40"><g stroke="#ff7a59" stroke-width="2.4" stroke-linecap="round" fill="none"><path d="M-18.4 -15.6 L-5 -4.6"/><path d="M0.2 -15 L0.2 -6"/><path d="M-10.5 10.3 L-4.6 4.6"/></g><circle cx="0" cy="0" r="6.3" fill="none" stroke="#ff7a59" stroke-width="3.6"/><circle cx="-18.4" cy="-15.6" r="3.0" fill="#ff7a59"/><circle cx="0.2" cy="-15" r="2.6" fill="#ff7a59"/><circle cx="-10.5" cy="10.3" r="2.35" fill="#ff7a59"/></svg>
<div class="t" style="left:288.95px;top:997.28px;font-size:25px;color:#202024;letter-spacing:0.277px;-webkit-text-stroke:0.18px #202024;">Digital Solutions Inc</div>
<div class="t" style="left:879.26px;top:997.28px;font-size:25px;color:#202024;-webkit-text-stroke:0.18px #202024;transform:scaleX(0.9709);transform-origin:0 0;">10</div>
<div class="t" style="left:1113.11px;top:997.28px;font-size:25px;color:#202024;-webkit-text-stroke:0.18px #202024;transform:scaleX(0.9300);transform-origin:0 0;">1</div>
<div class="t" style="left:1299.32px;top:997.28px;font-size:25px;color:#202024;-webkit-text-stroke:0.18px #202024;transform:scaleX(1.0268);transform-origin:0 0;">$147,482</div>
<div class="t" style="left:1595.71px;top:997.28px;font-size:25px;color:#202024;-webkit-text-stroke:0.18px #202024;transform:scaleX(1.0608);transform-origin:0 0;">$222,632</div>
<div class="b" style="left:1820.00px;top:995.00px;width:12.00px;height:32.00px;background:#4dad93;border-radius:4px;"></div>
<div class="b" style="left:1836.00px;top:995.00px;width:12.00px;height:32.00px;background:#4dad93;border-radius:4px;"></div>
<div class="b" style="left:1852.00px;top:995.00px;width:12.00px;height:32.00px;background:#4dad93;border-radius:4px;"></div>
<div class="b" style="left:1868.00px;top:995.00px;width:12.00px;height:32.00px;background:#4dad93;border-radius:4px;"></div>
<div class="b" style="left:1884.00px;top:995.00px;width:12.00px;height:32.00px;background:#4dad93;border-radius:4px;"></div>
<svg class="b" style="left:2064px;top:1001.20px" width="28" height="24" viewBox="2064 -10 28 24"><path d="M2069.5 1.85 L2086.6 1.85" stroke="#6c6c74" stroke-width="2.9" stroke-linecap="round" fill="none"/></svg>
<div class="t" style="left:2209.53px;top:997.28px;font-size:25px;color:#202024;letter-spacing:-0.174px;-webkit-text-stroke:0.18px #202024;width:364.47px;overflow:hidden;">CIO Impressed, Wants More Now</div>
<div class="b" style="left:138.00px;top:1106.00px;width:2436.00px;height:2.00px;background:#e5e5eb;"></div>
<div class="b" style="left:256.00px;top:1045.50px;width:2.00px;height:59.50px;background:#e5e5eb;"></div>
<svg class="b" style="left:178.50px;top:1056.10px" width="40" height="40" viewBox="-26 -22 40 40"><g stroke="#ff7a59" stroke-width="2.4" stroke-linecap="round" fill="none"><path d="M-18.4 -15.6 L-5 -4.6"/><path d="M0.2 -15 L0.2 -6"/><path d="M-10.5 10.3 L-4.6 4.6"/></g><circle cx="0" cy="0" r="6.3" fill="none" stroke="#ff7a59" stroke-width="3.6"/><circle cx="-18.4" cy="-15.6" r="3.0" fill="#ff7a59"/><circle cx="0.2" cy="-15" r="2.6" fill="#ff7a59"/><circle cx="-10.5" cy="10.3" r="2.35" fill="#ff7a59"/></svg>
<div class="t" style="left:289.73px;top:1061.28px;font-size:25px;color:#202024;letter-spacing:0.050px;-webkit-text-stroke:0.18px #202024;">Core Dynamics</div>
<div class="t" style="left:875.72px;top:1061.28px;font-size:25px;color:#202024;-webkit-text-stroke:0.18px #202024;transform:scaleX(1.1026);transform-origin:0 0;">20</div>
<div class="t" style="left:1110.19px;top:1061.28px;font-size:25px;color:#202024;-webkit-text-stroke:0.18px #202024;transform:scaleX(1.1381);transform-origin:0 0;">0</div>
<div class="t" style="left:1375.80px;top:1061.28px;font-size:25px;color:#202024;-webkit-text-stroke:0.18px #202024;transform:scaleX(1.0923);transform-origin:0 0;">$0</div>
<div class="t" style="left:1600.82px;top:1061.28px;font-size:25px;color:#202024;-webkit-text-stroke:0.18px #202024;transform:scaleX(1.0109);transform-origin:0 0;">$237,921</div>
<div class="b" style="left:1820.00px;top:1059.00px;width:12.00px;height:32.00px;background:#4dad93;border-radius:4px;"></div>
<div class="b" style="left:1836.00px;top:1059.00px;width:12.00px;height:32.00px;background:#4dad93;border-radius:4px;"></div>
<div class="b" style="left:1852.00px;top:1059.00px;width:12.00px;height:32.00px;background:#4dad93;border-radius:4px;"></div>
<div class="b" style="left:1868.00px;top:1059.00px;width:12.00px;height:32.00px;background:#4dad93;border-radius:4px;"></div>
<div class="b" style="left:1884.00px;top:1059.00px;width:12.00px;height:32.00px;background:#4dad93;border-radius:4px;"></div>
<svg class="b" style="left:2066px;top:1063.20px" width="24" height="24" viewBox="-12 -12 24 24"><path d="M0 -5.5 L6.5 6.6 L-6.5 6.6 Z" fill="#4dad93" stroke="#4dad93" stroke-width="3" stroke-linejoin="round"/></svg>
<div class="t" style="left:2209.53px;top:1061.28px;font-size:25px;color:#202024;letter-spacing:0.052px;-webkit-text-stroke:0.18px #202024;width:364.47px;overflow:hidden;">Customer Excited, Pushing New</div>
<div class="b" style="left:138.00px;top:1170.00px;width:2436.00px;height:2.00px;background:#e5e5eb;"></div>
<div class="b" style="left:256.00px;top:1109.50px;width:2.00px;height:59.50px;background:#e5e5eb;"></div>
<svg class="b" style="left:178.50px;top:1120.10px" width="40" height="40" viewBox="-26 -22 40 40"><g stroke="#ff7a59" stroke-width="2.4" stroke-linecap="round" fill="none"><path d="M-18.4 -15.6 L-5 -4.6"/><path d="M0.2 -15 L0.2 -6"/><path d="M-10.5 10.3 L-4.6 4.6"/></g><circle cx="0" cy="0" r="6.3" fill="none" stroke="#ff7a59" stroke-width="3.6"/><circle cx="-18.4" cy="-15.6" r="3.0" fill="#ff7a59"/><circle cx="0.2" cy="-15" r="2.6" fill="#ff7a59"/><circle cx="-10.5" cy="10.3" r="2.35" fill="#ff7a59"/></svg>
<div class="t" style="left:290.88px;top:1125.28px;font-size:25px;color:#202024;letter-spacing:0.245px;-webkit-text-stroke:0.18px #202024;">Vertex Networks</div>
<div class="t" style="left:880.31px;top:1125.28px;font-size:25px;color:#202024;-webkit-text-stroke:0.18px #202024;transform:scaleX(0.9412);transform-origin:0 0;">12</div>
<div class="t" style="left:1113.11px;top:1125.28px;font-size:25px;color:#202024;-webkit-text-stroke:0.18px #202024;transform:scaleX(0.9300);transform-origin:0 0;">1</div>
<div class="t" style="left:1328.72px;top:1125.28px;font-size:25px;color:#202024;-webkit-text-stroke:0.18px #202024;transform:scaleX(1.0157);transform-origin:0 0;">$6,777</div>
<div class="t" style="left:1600.72px;top:1125.28px;font-size:25px;color:#202024;-webkit-text-stroke:0.18px #202024;transform:scaleX(1.0114);transform-origin:0 0;">$174,769</div>
<div class="b" style="left:1820.00px;top:1123.00px;width:12.00px;height:32.00px;background:#7aba7b;border-radius:4px;"></div>
<div class="b" style="left:1836.00px;top:1123.00px;width:12.00px;height:32.00px;background:#7aba7b;border-radius:4px;"></div>
<div class="b" style="left:1852.00px;top:1123.00px;width:12.00px;height:32.00px;background:#7aba7b;border-radius:4px;"></div>
<div class="b" style="left:1868.00px;top:1123.00px;width:12.00px;height:32.00px;background:#7aba7b;border-radius:4px;"></div>
<div class="b" style="left:1884.00px;top:1123.00px;width:12.00px;height:32.00px;background:#f8f8f8;border-radius:4px;"></div>
<svg class="b" style="left:2066px;top:1127.20px" width="24" height="24" viewBox="-12 -12 24 24"><path d="M0 -5.5 L6.5 6.6 L-6.5 6.6 Z" fill="#4dad93" stroke="#4dad93" stroke-width="3" stroke-linejoin="round"/></svg>
<div class="t" style="left:2208.75px;top:1125.28px;font-size:25px;color:#202024;letter-spacing:0.196px;-webkit-text-stroke:0.18px #202024;width:365.25px;overflow:hidden;">Positive Feedback, Next Steps for Deal</div>
<div class="b" style="left:138.00px;top:1234.00px;width:2436.00px;height:2.00px;background:#e5e5eb;"></div>
<div class="b" style="left:256.00px;top:1173.50px;width:2.00px;height:59.50px;background:#e5e5eb;"></div>
<svg class="b" style="left:178.50px;top:1184.10px" width="40" height="40" viewBox="-26 -22 40 40"><g stroke="#ff7a59" stroke-width="2.4" stroke-linecap="round" fill="none"><path d="M-18.4 -15.6 L-5 -4.6"/><path d="M0.2 -15 L0.2 -6"/><path d="M-10.5 10.3 L-4.6 4.6"/></g><circle cx="0" cy="0" r="6.3" fill="none" stroke="#ff7a59" stroke-width="3.6"/><circle cx="-18.4" cy="-15.6" r="3.0" fill="#ff7a59"/><circle cx="0.2" cy="-15" r="2.6" fill="#ff7a59"/><circle cx="-10.5" cy="10.3" r="2.35" fill="#ff7a59"/></svg>
<div class="t" style="left:290.20px;top:1189.28px;font-size:25px;color:#202024;letter-spacing:0.416px;-webkit-text-stroke:0.18px #202024;">Zenith Corporation</div>
<div class="t" style="left:875.66px;top:1189.28px;font-size:25px;color:#202024;-webkit-text-stroke:0.18px #202024;transform:scaleX(1.0947);transform-origin:0 0;">34</div>
<div class="t" style="left:1110.19px;top:1189.28px;font-size:25px;color:#202024;-webkit-text-stroke:0.18px #202024;transform:scaleX(1.1381);transform-origin:0 0;">0</div>
<div class="t" style="left:1375.80px;top:1189.28px;font-size:25px;color:#202024;-webkit-text-stroke:0.18px #202024;transform:scaleX(1.0923);transform-origin:0 0;">$0</div>
<div class="t" style="left:1594.31px;top:1189.28px;font-size:25px;color:#202024;-webkit-text-stroke:0.18px #202024;transform:scaleX(1.0716);transform-origin:0 0;">$286,550</div>
<div class="b" style="left:1820.00px;top:1187.00px;width:12.00px;height:32.00px;background:#7aba7b;border-radius:4px;"></div>
<div class="b" style="left:1836.00px;top:1187.00px;width:12.00px;height:32.00px;background:#7aba7b;border-radius:4px;"></div>
<div class="b" style="left:1852.00px;top:1187.00px;width:12.00px;height:32.00px;background:#7aba7b;border-radius:4px;"></div>
<div class="b" style="left:1868.00px;top:1187.00px;width:12.00px;height:32.00px;background:#7aba7b;border-radius:4px;"></div>
<div class="b" style="left:1884.00px;top:1187.00px;width:12.00px;height:32.00px;background:#f8f8f8;border-radius:4px;"></div>
<svg class="b" style="left:2064px;top:1193.20px" width="28" height="24" viewBox="2064 -10 28 24"><path d="M2069.5 1.85 L2086.6 1.85" stroke="#6c6c74" stroke-width="2.9" stroke-linecap="round" fill="none"/></svg>
<div class="t" style="left:2208.75px;top:1189.28px;font-size:25px;color:#202024;letter-spacing:0.247px;-webkit-text-stroke:0.18px #202024;width:365.25px;overflow:hidden;">Expansion opportunity, VP Finance</div>
<div class="b" style="left:138.00px;top:1298.00px;width:2436.00px;height:2.00px;background:#e5e5eb;"></div>
<div class="b" style="left:256.00px;top:1237.50px;width:2.00px;height:59.50px;background:#e5e5eb;"></div>
<svg class="b" style="left:178.50px;top:1248.10px" width="40" height="40" viewBox="-26 -22 40 40"><g stroke="#ff7a59" stroke-width="2.4" stroke-linecap="round" fill="none"><path d="M-18.4 -15.6 L-5 -4.6"/><path d="M0.2 -15 L0.2 -6"/><path d="M-10.5 10.3 L-4.6 4.6"/></g><circle cx="0" cy="0" r="6.3" fill="none" stroke="#ff7a59" stroke-width="3.6"/><circle cx="-18.4" cy="-15.6" r="3.0" fill="#ff7a59"/><circle cx="0.2" cy="-15" r="2.6" fill="#ff7a59"/><circle cx="-10.5" cy="10.3" r="2.35" fill="#ff7a59"/></svg>
<div class="t" style="left:290.88px;top:1253.28px;font-size:25px;color:#202024;letter-spacing:0.132px;-webkit-text-stroke:0.18px #202024;">Vertex Services</div>
<div class="t" style="left:875.59px;top:1253.28px;font-size:25px;color:#202024;-webkit-text-stroke:0.18px #202024;transform:scaleX(1.1126);transform-origin:0 0;">96</div>
<div class="t" style="left:1110.19px;top:1253.28px;font-size:25px;color:#202024;-webkit-text-stroke:0.18px #202024;transform:scaleX(1.1381);transform-origin:0 0;">0</div>
<div class="t" style="left:1375.80px;top:1253.28px;font-size:25px;color:#202024;-webkit-text-stroke:0.18px #202024;transform:scaleX(1.0923);transform-origin:0 0;">$0</div>
<div class="t" style="left:1599.02px;top:1253.28px;font-size:25px;color:#202024;-webkit-text-stroke:0.18px #202024;transform:scaleX(1.0287);transform-origin:0 0;">$180,697</div>
<div class="b" style="left:1820.00px;top:1251.00px;width:12.00px;height:32.00px;background:#7aba7b;border-radius:4px;"></div>
<div class="b" style="left:1836.00px;top:1251.00px;width:12.00px;height:32.00px;background:#7aba7b;border-radius:4px;"></div>
<div class="b" style="left:1852.00px;top:1251.00px;width:12.00px;height:32.00px;background:#7aba7b;border-radius:4px;"></div>
<div class="b" style="left:1868.00px;top:1251.00px;width:12.00px;height:32.00px;background:#7aba7b;border-radius:4px;"></div>
<div class="b" style="left:1884.00px;top:1251.00px;width:12.00px;height:32.00px;background:#f8f8f8;border-radius:4px;"></div>
<svg class="b" style="left:2066px;top:1255.20px" width="24" height="24" viewBox="-12 -12 24 24"><path d="M0 -5.5 L6.5 6.6 L-6.5 6.6 Z" fill="#4dad93" stroke="#4dad93" stroke-width="3" stroke-linejoin="round"/></svg>
<div class="t" style="left:2210.25px;top:1253.28px;font-size:25px;color:#202024;letter-spacing:0.369px;-webkit-text-stroke:0.18px #202024;width:363.75px;overflow:hidden;">Technical Director Praises Platform</div>
<div class="b" style="left:138.00px;top:1362.00px;width:2436.00px;height:2.00px;background:#e5e5eb;"></div>
<div class="b" style="left:256.00px;top:1301.50px;width:2.00px;height:59.50px;background:#e5e5eb;"></div>
<svg class="b" style="left:178.50px;top:1312.10px" width="40" height="40" viewBox="-26 -22 40 40"><g stroke="#ff7a59" stroke-width="2.4" stroke-linecap="round" fill="none"><path d="M-18.4 -15.6 L-5 -4.6"/><path d="M0.2 -15 L0.2 -6"/><path d="M-10.5 10.3 L-4.6 4.6"/></g><circle cx="0" cy="0" r="6.3" fill="none" stroke="#ff7a59" stroke-width="3.6"/><circle cx="-18.4" cy="-15.6" r="3.0" fill="#ff7a59"/><circle cx="0.2" cy="-15" r="2.6" fill="#ff7a59"/><circle cx="-10.5" cy="10.3" r="2.35" fill="#ff7a59"/></svg>
<div class="t" style="left:288.95px;top:1317.28px;font-size:25px;color:#202024;letter-spacing:0.067px;-webkit-text-stroke:0.18px #202024;">Nova Dynamics</div>
<div class="t" style="left:891.26px;top:1317.28px;font-size:25px;color:#202024;-webkit-text-stroke:0.18px #202024;transform:scaleX(1.0970);transform-origin:0 0;">3</div>
<div class="t" style="left:1113.11px;top:1317.28px;font-size:25px;color:#202024;-webkit-text-stroke:0.18px #202024;transform:scaleX(0.9300);transform-origin:0 0;">1</div>
<div class="t" style="left:1297.01px;top:1317.28px;font-size:25px;color:#202024;-webkit-text-stroke:0.18px #202024;transform:scaleX(1.0474);transform-origin:0 0;">$149,948</div>
<div class="t" style="left:1608.80px;top:1317.28px;font-size:25px;color:#202024;-webkit-text-stroke:0.18px #202024;transform:scaleX(1.0793);transform-origin:0 0;">$94,047</div>
<div class="b" style="left:1820.00px;top:1315.00px;width:12.00px;height:32.00px;background:#7aba7b;border-radius:4px;"></div>
<div class="b" style="left:1836.00px;top:1315.00px;width:12.00px;height:32.00px;background:#7aba7b;border-radius:4px;"></div>
<div class="b" style="left:1852.00px;top:1315.00px;width:12.00px;height:32.00px;background:#7aba7b;border-radius:4px;"></div>
<div class="b" style="left:1868.00px;top:1315.00px;width:12.00px;height:32.00px;background:#7aba7b;border-radius:4px;"></div>
<div class="b" style="left:1884.00px;top:1315.00px;width:12.00px;height:32.00px;background:#f8f8f8;border-radius:4px;"></div>
<svg class="b" style="left:2064px;top:1321.20px" width="28" height="24" viewBox="2064 -10 28 24"><path d="M2069.5 1.85 L2086.6 1.85" stroke="#6c6c74" stroke-width="2.9" stroke-linecap="round" fill="none"/></svg>
<div class="t" style="left:2210.68px;top:1317.28px;font-size:25px;color:#202024;letter-spacing:0.134px;-webkit-text-stroke:0.18px #202024;width:363.32px;overflow:hidden;">Won deal, next deal in final stages</div>
<div class="b" style="left:138.00px;top:1426.00px;width:2436.00px;height:2.00px;background:#e5e5eb;"></div>
<div class="b" style="left:256.00px;top:1365.50px;width:2.00px;height:59.50px;background:#e5e5eb;"></div>
<svg class="b" style="left:178.50px;top:1376.10px" width="40" height="40" viewBox="-26 -22 40 40"><g stroke="#ff7a59" stroke-width="2.4" stroke-linecap="round" fill="none"><path d="M-18.4 -15.6 L-5 -4.6"/><path d="M0.2 -15 L0.2 -6"/><path d="M-10.5 10.3 L-4.6 4.6"/></g><circle cx="0" cy="0" r="6.3" fill="none" stroke="#ff7a59" stroke-width="3.6"/><circle cx="-18.4" cy="-15.6" r="3.0" fill="#ff7a59"/><circle cx="0.2" cy="-15" r="2.6" fill="#ff7a59"/><circle cx="-10.5" cy="10.3" r="2.35" fill="#ff7a59"/></svg>
<div class="t" style="left:290.88px;top:1381.28px;font-size:25px;color:#202024;letter-spacing:0.036px;-webkit-text-stroke:0.18px #202024;">Vanguard Dynamics Group</div>
<div class="t" style="left:875.72px;top:1381.28px;font-size:25px;color:#202024;-webkit-text-stroke:0.18px #202024;transform:scaleX(1.1026);transform-origin:0 0;">20</div>
<div class="t" style="left:1110.19px;top:1381.28px;font-size:25px;color:#202024;-webkit-text-stroke:0.18px #202024;transform:scaleX(1.1381);transform-origin:0 0;">0</div>
<div class="t" style="left:1375.80px;top:1381.28px;font-size:25px;color:#202024;-webkit-text-stroke:0.18px #202024;transform:scaleX(1.0923);transform-origin:0 0;">$0</div>
<div class="t" style="left:1599.52px;top:1381.28px;font-size:25px;color:#202024;-webkit-text-stroke:0.18px #202024;transform:scaleX(1.0219);transform-origin:0 0;">$147,985</div>
<div class="b" style="left:1820.00px;top:1379.00px;width:12.00px;height:32.00px;background:#7aba7b;border-radius:4px;"></div>
<div class="b" style="left:1836.00px;top:1379.00px;width:12.00px;height:32.00px;background:#7aba7b;border-radius:4px;"></div>
<div class="b" style="left:1852.00px;top:1379.00px;width:12.00px;height:32.00px;background:#7aba7b;border-radius:4px;"></div>
<div class="b" style="left:1868.00px;top:1379.00px;width:12.00px;height:32.00px;background:#7aba7b;border-radius:4px;"></div>
<div class="b" style="left:1884.00px;top:1379.00px;width:12.00px;height:32.00px;background:#f8f8f8;border-radius:4px;"></div>
<svg class="b" style="left:2066px;top:1383.20px" width="24" height="24" viewBox="-12 -12 24 24"><path d="M0 -5.5 L6.5 6.6 L-6.5 6.6 Z" fill="#4dad93" stroke="#4dad93" stroke-width="3" stroke-linejoin="round"/></svg>
<div class="t" style="left:2210.25px;top:1381.28px;font-size:25px;color:#202024;letter-spacing:0.262px;-webkit-text-stroke:0.18px #202024;width:363.75px;overflow:hidden;">Two deals closed, active</div>
<div class="t" style="left:2541.45px;top:1381.28px;font-size:25px;color:#202024;letter-spacing:2.275px;-webkit-text-stroke:0.18px #202024;width:32.55px;overflow:hidden;">em</div>
<div class="b" style="left:138.00px;top:1490.00px;width:2436.00px;height:2.00px;background:#e5e5eb;"></div>
<div class="b" style="left:256.00px;top:1429.50px;width:2.00px;height:59.50px;background:#e5e5eb;"></div>
<svg class="b" style="left:178.50px;top:1440.10px" width="40" height="40" viewBox="-26 -22 40 40"><g stroke="#ff7a59" stroke-width="2.4" stroke-linecap="round" fill="none"><path d="M-18.4 -15.6 L-5 -4.6"/><path d="M0.2 -15 L0.2 -6"/><path d="M-10.5 10.3 L-4.6 4.6"/></g><circle cx="0" cy="0" r="6.3" fill="none" stroke="#ff7a59" stroke-width="3.6"/><circle cx="-18.4" cy="-15.6" r="3.0" fill="#ff7a59"/><circle cx="0.2" cy="-15" r="2.6" fill="#ff7a59"/><circle cx="-10.5" cy="10.3" r="2.35" fill="#ff7a59"/></svg>
<div class="t" style="left:290.88px;top:1445.28px;font-size:25px;color:#202024;letter-spacing:0.207px;-webkit-text-stroke:0.18px #202024;">Velocity Cloud Group</div>
<div class="t" style="left:882.31px;top:1445.28px;font-size:25px;color:#202024;-webkit-text-stroke:0.18px #202024;transform:scaleX(0.9300);transform-origin:0 0;">11</div>
<div class="t" style="left:1113.11px;top:1445.28px;font-size:25px;color:#202024;-webkit-text-stroke:0.18px #202024;transform:scaleX(0.9300);transform-origin:0 0;">1</div>
<div class="t" style="left:1304.23px;top:1445.28px;font-size:25px;color:#202024;-webkit-text-stroke:0.18px #202024;transform:scaleX(0.9791);transform-origin:0 0;">$101,567</div>
<div class="t" style="left:1599.52px;top:1445.28px;font-size:25px;color:#202024;-webkit-text-stroke:0.18px #202024;transform:scaleX(1.0224);transform-origin:0 0;">$226,216</div>
<div class="b" style="left:1820.00px;top:1443.00px;width:12.00px;height:32.00px;background:#7aba7b;border-radius:4px;"></div>
<div class="b" style="left:1836.00px;top:1443.00px;width:12.00px;height:32.00px;background:#7aba7b;border-radius:4px;"></div>
<div class="b" style="left:1852.00px;top:1443.00px;width:12.00px;height:32.00px;background:#7aba7b;border-radius:4px;"></div>
<div class="b" style="left:1868.00px;top:1443.00px;width:12.00px;height:32.00px;background:#7aba7b;border-radius:4px;"></div>
<div class="b" style="left:1884.00px;top:1443.00px;width:12.00px;height:32.00px;background:#f8f8f8;border-radius:4px;"></div>
<svg class="b" style="left:2064px;top:1449.20px" width="28" height="24" viewBox="2064 -10 28 24"><path d="M2069.5 1.85 L2086.6 1.85" stroke="#6c6c74" stroke-width="2.9" stroke-linecap="round" fill="none"/></svg>
<div class="t" style="left:2208.75px;top:1445.28px;font-size:25px;color:#202024;letter-spacing:0.048px;-webkit-text-stroke:0.18px #202024;width:365.25px;overflow:hidden;">Recent Win, Strong Open Deal</div>
<div class="b" style="left:2574.00px;top:401.00px;width:4.00px;height:1199.00px;background:#dedede;z-index:30;"></div>
<div class="b" style="left:2474.60px;top:1346.60px;width:78.90px;height:78.80px;border:2px solid #e9e9ee;border-radius:50%;background:#f7f7f8;box-shadow:0 6px 10px rgba(30,30,60,0.10),0 2px 4px rgba(30,30,60,0.06);"></div>
<svg class="b" style="left:2494.32px;top:1366.32px" width="39.36" height="39.36" viewBox="0 0 24 24" fill="none" stroke="#1c1c1f" stroke-width="2" stroke-linecap="round" stroke-linejoin="round"><circle cx="12" cy="12" r="10"/><path d="M9.09 9a3 3 0 0 1 5.83 1c0 2-3 3-3 3"/><path d="M12 17h.01"/></svg>
<div id="glow"></div>
</div>
</div>
</body></html>
